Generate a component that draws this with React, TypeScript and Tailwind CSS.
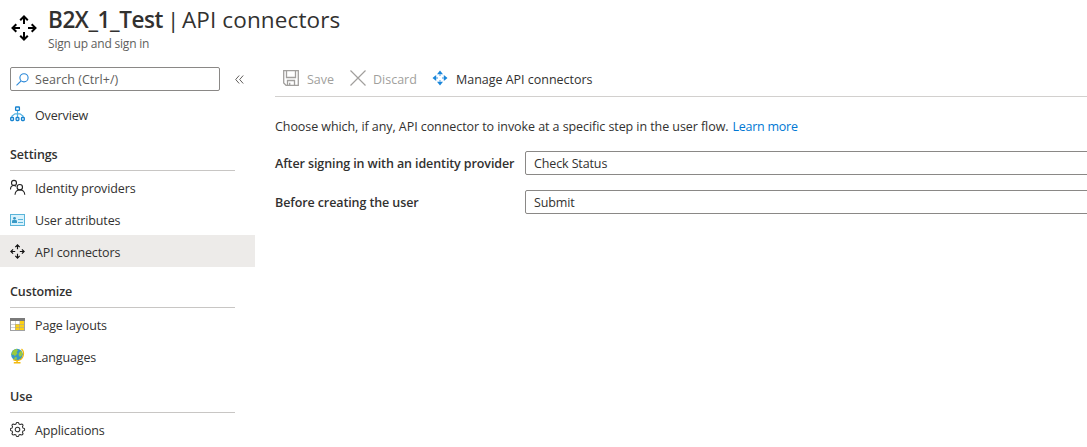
import type { ReactNode } from "react";

function ArrowsIcon({ size, color, weight = 1.6 }: { size: number; color: string; weight?: number }) {
  return (
    <svg width={size} height={size} viewBox="0 0 26 26" fill="none" stroke={color} strokeWidth={weight}>
      <path d="M13 9V1.5M9.200 5.300 13 1.500l3.800 3.800M13 17v7.500M9.200 20.700l3.800 3.800 3.800-3.800M9 13H1.500M5.300 9.200 1.500 13l3.800 3.800M17 13h7.500M20.700 9.200l3.800 3.800-3.800 3.800" />
    </svg>
  );
}

function SolidArrowsIcon() {
  return (
    <svg width="16" height="16" viewBox="0 0 16 16">
      <path d="M8 .5 11 4.200H5zM8 15.500l3-3.700H5zM.5 8l3.700 3V5zM15.500 8l-3.700 3V5z" fill="#1b86d9" />
      <path d="M7 4.200h2v1.600H7zM7 10.200h2v1.600H7zM4.200 7h1.600v2H4.200zM10.200 7h1.600v2h-1.600z" fill="#7dbcf0" />
    </svg>
  );
}

function SearchIcon() {
  return (
    <svg width="13" height="13" viewBox="0 0 13 13" fill="none" stroke="#2b88d8" strokeWidth="1.1">
      <circle cx="8" cy="4.8" r="4.1" />
      <path d="M5.1 7.8.5 12.4" />
    </svg>
  );
}

function OverviewIcon() {
  return (
    <svg width="16" height="16" viewBox="0 0 16 16" fill="none">
      <path d="M7.5 4.5v6.5M2 11.5V10l3-2.2h5L13 10v1.5" stroke="#50b0e0" strokeWidth="1.2" />
      <g stroke="#1683d0" strokeWidth="1.3" fill="#fff">
        <rect x="5.6" y="1" width="3.8" height="3.4" rx=".5" />
        <rect x=".7" y="11.5" width="2.8" height="3" rx=".8" />
        <rect x="6.1" y="11.5" width="2.8" height="3" rx=".8" />
        <rect x="11.5" y="11.5" width="2.8" height="3" rx=".8" />
      </g>
    </svg>
  );
}

function PeopleIcon() {
  return (
    <svg width="16" height="16" viewBox="0 0 16 16" fill="none" stroke="#222" strokeWidth="1.1">
      <circle cx="4" cy="3.9" r="2.5" />
      <path d="M.5 10.500c0-2.5 1.3-4 3.3-4 .9 0 1.7.3 2.3.9" />
      <circle cx="9.800" cy="8.200" r="2.700" />
      <path d="M5 15.700c.2-2.8 2.1-4.700 4.900-4.700s4.700 1.900 4.900 4.700" />
    </svg>
  );
}

function CardIcon() {
  return (
    <svg className="relative top-px" width="16" height="16" viewBox="0 0 16 16">
      <rect x=".5" y="2.5" width="14" height="11" fill="#d9f2fc" stroke="#59b4d9" />
      <circle cx="4.5" cy="6.3" r="1.4" fill="#3999c6" />
      <path d="M2 11V9.200Q2 8 3.200 8h2.600Q7 8 7 9.200V11z" fill="#3999c6" />
      <path d="M8 7.500h5M8 10.500h5" stroke="#59b4d9" />
    </svg>
  );
}

function LayoutIcon() {
  return (
    <svg width="16" height="16" viewBox="0 0 16 16">
      <path d="M0 2h15v13H0z" fill="#a0a1a2" />
      <path d="M0 2h15v3H0z" fill="#7a7a7a" />
      <path d="M1 5h4v3H1zM5.500 5h4v3h-4zM1 8.500h4v2.500H1zM1 11.500h4V14H1z" fill="#fff" />
      <path d="M10 5h4v3h-4zM5.500 8.500h4V11h-4zM10 8.500h4V11h-4zM5.500 11.500h4V14h-4zM10 11.500h4V14h-4z" fill="#fcd116" />
    </svg>
  );
}

function GlobeIcon() {
  return (
    <svg width="16" height="16" viewBox="0 0 16 16">
      <circle cx="7" cy="6.600" r="5.900" fill="#3999c6" />
      <path d="M3 2.400 6.500.800 8 2.500 6.500 4l1 1.500L5 8 3 6.500 1.300 7zM9 5l2-2.600 1.600 3L11.500 8 10 9 8.500 7zM5 9l2 .6-.5 2.400L4 11z" fill="#9ccb3b" />
      <path d="M11.500 1c3.600 3.400 2.400 11-4.500 11.600-1.600.1-3-.3-4-1" fill="none" stroke="#f2b90f" strokeWidth="1.200" />
      <path d="M6.400 12.500h1.400v1.600h2.700v1.400H3.800v-1.400h2.600z" fill="#f2b90f" />
    </svg>
  );
}

function GearIcon() {
  const teeth = Array.from({ length: 97 }, (_, i) => {
    const a = (i / 96) * Math.PI * 2;
    const r = 6.35 + 0.75 * Math.tanh(2.5 * Math.cos(8 * a));
    return `${i ? "L" : "M"}${(7.5 + r * Math.cos(a)).toFixed(2)} ${(7.5 + r * Math.sin(a)).toFixed(2)}`;
  }).join("");
  return (
    <svg className="relative top-px" width="16" height="16" viewBox="0 0 16 16" fill="none" stroke="#333" strokeWidth="1.050">
      <path d={teeth} />
      <circle cx="7.500" cy="7.500" r="2.300" />
    </svg>
  );
}

function SaveIcon() {
  return (
    <svg width="16" height="16" viewBox="0 0 16 16" fill="none" stroke="#a19f9d" strokeWidth="1.300">
      <path d="M.7.700h14.600v14.600H3L.7 13z" />
      <path d="M3.500.700v6.800h9V.700M4.500 15.300v-4.800h7v4.800M6.700 15.300v-2.600" />
    </svg>
  );
}

function DiscardIcon() {
  return (
    <svg width="16" height="16" viewBox="0 0 16 16" fill="none" stroke="#a19f9d" strokeWidth="1.200">
      <path d="m.5.500 15 15M15.500.500l-15 15" />
    </svg>
  );
}

function NavItem({ icon, active, children }: { icon: ReactNode; active?: boolean; children: ReactNode }) {
  return (
    <a className={`flex h-8 items-center pl-[10px] ${active ? "bg-[#edebe9]" : ""}`}>
      <span className="flex w-[25px] shrink-0 items-center">{icon}</span>
      <span className="whitespace-nowrap pt-[3px]">{children}</span>
    </a>
  );
}

function NavHeading({ children }: { children: ReactNode }) {
  return (
    <h2 className="ml-[10px] flex h-[41px] w-[225px] items-center border-b border-[#c8c6c4] pt-[9px] font-semibold tracking-[-0.1px]">
      {children}
    </h2>
  );
}

function Field({ label, value }: { label: ReactNode; value: string }) {
  return (
    <div className="flex h-6 items-center">
      <span className="w-[250px] shrink-0 whitespace-nowrap pt-[2px] font-semibold tracking-[-0.1px]">{label}</span>
      <div className="flex h-6 w-[600px] shrink-0 items-center rounded-[2px] border border-[#8a8886] pl-2 pt-[2px]">
        <span className="tracking-[-0.12px]">{value}</span>
      </div>
    </div>
  );
}

export default function App() {
  return (
    <div className="flex h-[447px] w-[1087px] flex-col overflow-hidden bg-white font-['Open_Sans','Noto_Sans',sans-serif] text-[12.5px] leading-4 text-[#323130]">
      <header className="flex h-[66px] shrink-0 pl-[11px]">
        <span className="mt-[15px] w-[37px]">
          <ArrowsIcon size={26} color="#000" weight={2} />
        </span>
        <div className="pt-[6px]">
          <h1 className="flex h-[27px] items-center whitespace-nowrap text-[22.5px] leading-[27px]">
            <span className="w-[119px] font-semibold tracking-[-0.42px]">B2X_1_Test</span>
            <span className="w-[15px]">|</span>
            <span className="tracking-[0.12px]">API connectors</span>
          </h1>
          <p className="mt-[3px] text-[12px] tracking-[-0.200px] text-[#605e5c]">Sign up and sign in</p>
        </div>
      </header>
      <div className="flex min-h-0 flex-1">
        <nav className="w-[255px] shrink-0 tracking-[-0.13px]">
          <div className="flex h-8 items-start pl-[10px] pt-px">
            <div className="flex h-6 w-[210px] items-center rounded-[2px] border border-[#8a8886] pl-[5px] text-[#605e5c]">
              <SearchIcon />
              <span className="ml-[6px] pt-[2px] tracking-[0.050px]">Search (Ctrl+/)</span>
            </div>
            <svg className="ml-[15px] mt-2" width="9" height="9" viewBox="0 0 9 9" fill="none" stroke="#605e5c">
              <path d="M4.200.500.700 4.500l3.500 4M8.200.500 4.700 4.500l3.500 4" />
            </svg>
          </div>
          <NavItem icon={<OverviewIcon />}>Overview</NavItem>
          <NavHeading>Settings</NavHeading>
          <NavItem icon={<PeopleIcon />}>Identity providers</NavItem>
          <NavItem icon={<CardIcon />}>User attributes</NavItem>
          <NavItem icon={<ArrowsIcon size={15} color="#111" weight={2} />} active>API connectors</NavItem>
          <NavHeading>Customize</NavHeading>
          <NavItem icon={<LayoutIcon />}>Page layouts</NavItem>
          <NavItem icon={<GlobeIcon />}>Languages</NavItem>
          <NavHeading>Use</NavHeading>
          <NavItem icon={<GearIcon />}>Applications</NavItem>
        </nav>
        <main className="min-w-0 flex-1 pl-5">
          <div className="flex h-[31px] items-center whitespace-nowrap border-b border-[#d2d0ce] pb-[6px] pl-2">
            <SaveIcon />
            <span className="ml-[8px] w-[35px] pt-[3px] text-[#a19f9d]">Save</span>
            <span className="ml-2"><DiscardIcon /></span>
            <span className="ml-[7px] w-[59px] pt-[3px] text-[#a19f9d]">Discard</span>
            <SolidArrowsIcon />
            <span className="ml-[8px] pt-[3px] tracking-[-0.020px]">Manage API connectors</span>
          </div>
          <p className="mt-[22px] whitespace-nowrap">
            <span className="tracking-[-0.070px]">Choose which, if any, API connector to invoke at a specific step in the user flow.</span>
            <a className="ml-[4px] tracking-[-0.250px] text-[#0078d4]">Learn more</a>
          </p>
          <div className="mt-4 flex flex-col gap-[15px]">
            <Field label="After signing in with an identity provider" value="Check Status" />
            <Field label="Before creating the user" value="Submit" />
          </div>
        </main>
      </div>
    </div>
  );
}
